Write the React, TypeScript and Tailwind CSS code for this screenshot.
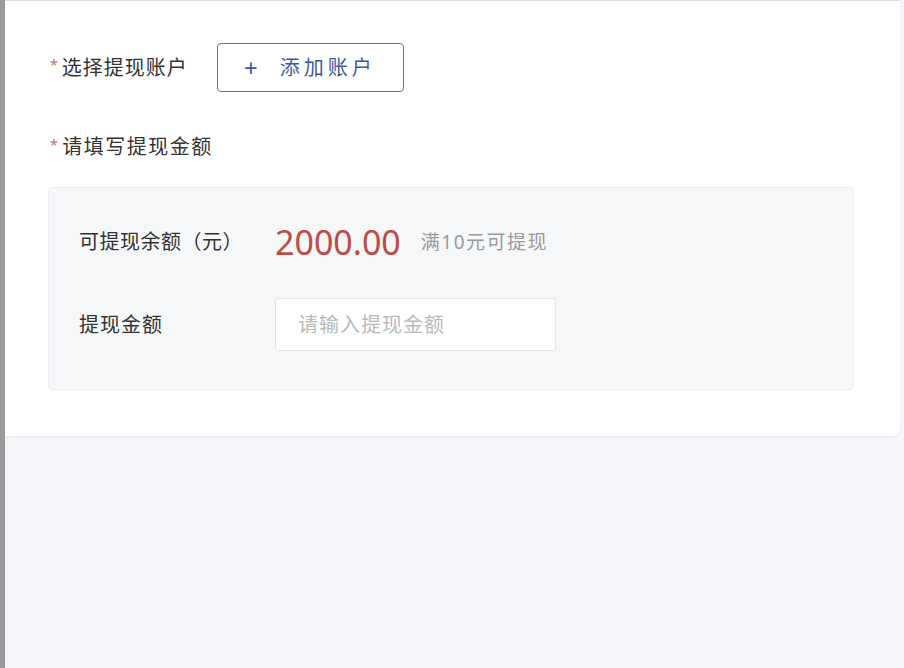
const App = () => {
  return (
    <div
      className="flex h-[668px] w-full bg-[#f4f5f9]"
      style={{ fontFamily: '"Noto Sans", "Noto Sans CJK SC", sans-serif' }}
    >
      <div className="w-[5px] shrink-0 bg-[#9b9b9b]" />
      <div className="flex-1 pr-[4px]">
        <div className="h-[436px] rounded-br-[8px] border-t border-[#dcdde0] bg-white pl-[43px] pt-[42px] shadow-[0_1px_2px_rgba(0,0,0,0.05)]">
          <div className="flex h-[49px] items-center">
            <div className="flex w-[169px] items-center text-[20px] tracking-[1px] text-[#333]">
              <span className="ml-[2px] mr-[3px] mt-[-6px] text-[14px] text-[#d26a66]">*</span>
              选择提现账户
            </div>
            <button className="flex h-[49px] w-[187px] items-center rounded-[4px] border border-[#5d79ad] pl-[26px] text-[20px] tracking-[4px] text-[#3b5a9c]">
              <span className="mr-[22px] text-[24px] leading-none tracking-normal">+</span>
              添加账户
            </button>
          </div>

          <div className="mt-[43px] flex h-[24px] items-center text-[20px] tracking-[1.5px] text-[#333]">
            <span className="ml-[2px] mr-[3px] mt-[-6px] text-[14px] text-[#d26a66]">*</span>
            请填写提现金额
          </div>

          <div className="mr-[46px] mt-[28px] h-[203px] rounded-[4px] border border-[#eceef1] bg-[#f6f7f9] pl-[30px] pt-[39px]">
            <div className="flex h-[30px] items-center">
              <div className="w-[196px] text-[20px] tracking-[0.5px] text-[#333]">可提现余额（元）</div>
              <div className="text-[34px] leading-none text-[#bd4b46]">2000.00</div>
              <div className="ml-[20px] text-[19px] tracking-[1.5px] text-[#9a9a9a]">满10元可提现</div>
            </div>
            <div className="mt-[41px] flex items-center">
              <div className="w-[196px] text-[20px] tracking-[1px] text-[#333]">提现金额</div>
              <input
                className="h-[53px] w-[281px] rounded-[3px] border border-[#e4e5e8] bg-white px-[22px] text-[20px] tracking-[1px] outline-none placeholder:text-[#b9b9b9]"
                placeholder="请输入提现金额"
              />
            </div>
          </div>
        </div>
      </div>
    </div>
  );
};

export default App;
